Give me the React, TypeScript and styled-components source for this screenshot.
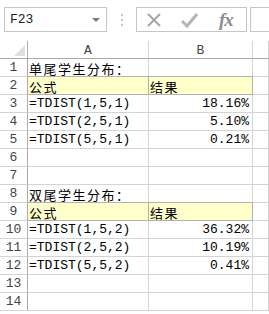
import React from "react";
import styled, { createGlobalStyle } from "styled-components";

const GlobalStyle = createGlobalStyle`
  html, body {
    margin: 0;
    padding: 0;
    background: #ffffff;
  }
  body {
    width: 269px;
    height: 314px;
    overflow: hidden;
    font-family: "Liberation Mono", "Noto Sans CJK SC", monospace;
  }
`;

const Page = styled.div`
  width: 269px;
  height: 314px;
  overflow: hidden;
  background: #fff;
`;

const TopBar = styled.div`
  height: 41px;
  box-sizing: border-box;
  padding: 7px 0 0 4px;
  display: flex;
  align-items: flex-start;
`;

const NameBox = styled.div`
  width: 103px;
  height: 25px;
  box-sizing: border-box;
  border: 1px solid #c6c6c6;
  display: flex;
  align-items: center;
  justify-content: space-between;
  padding: 0 6px 0 5px;
  font-family: "Liberation Mono", monospace;
  font-size: 13px;
  color: #222;
`;

const Caret = styled.span`
  width: 0;
  height: 0;
  border-left: 4px solid transparent;
  border-right: 4px solid transparent;
  border-top: 4px solid #7a7a7a;
`;

const Grip = styled.div`
  width: 29px;
  height: 25px;
  display: flex;
  flex-direction: column;
  align-items: center;
  justify-content: center;
  gap: 3px;
  span {
    width: 2px;
    height: 2px;
    background: #c8c8c8;
  }
`;

const FormulaButtons = styled.div`
  width: 111px;
  height: 25px;
  box-sizing: border-box;
  border: 1px solid #c6c6c6;
  display: flex;
  align-items: center;
  padding: 0 6px 0 9px;
`;

const IconSlot = styled.div<{ w: number }>`
  width: ${(p) => p.w}px;
  display: flex;
  align-items: center;
  justify-content: flex-start;
`;

const Fx = styled.span`
  font-family: "Liberation Serif", serif;
  font-style: italic;
  font-weight: bold;
  font-size: 19px;
  color: #8c8c8c;
  letter-spacing: -1px;
  line-height: 1;
`;

const FormulaInput = styled.div`
  flex: 1;
  height: 25px;
  margin-left: 3px;
  box-sizing: border-box;
  border: 1px solid #c6c6c6;
  border-right: none;
`;

const Sheet = styled.div`
  display: grid;
  grid-template-columns: 28px 121px 104px 1fr;
  grid-auto-rows: 18px;
`;

const Corner = styled.div`
  box-sizing: border-box;
  border-right: 1px solid #ababab;
  border-bottom: 1px solid #ababab;
  position: relative;
`;

const CornerMark = styled.span`
  position: absolute;
  right: 2px;
  bottom: 2px;
  width: 0;
  height: 0;
  border-left: 11px solid transparent;
  border-bottom: 11px solid #dfdfdf;
`;

const ColHead = styled.div`
  box-sizing: border-box;
  border-right: 1px solid #d4d4d4;
  border-bottom: 1px solid #ababab;
  display: flex;
  align-items: center;
  justify-content: center;
  font-family: "Liberation Mono", monospace;
  font-size: 13px;
  color: #444;
  padding-top: 1px;
`;

const RowHead = styled.div`
  box-sizing: border-box;
  border-right: 1px solid #ababab;
  border-bottom: 1px solid #d4d4d4;
  display: flex;
  align-items: center;
  justify-content: center;
  font-family: "Liberation Mono", monospace;
  font-size: 13px;
  color: #444;
`;

const Cell = styled.div<{ note?: boolean; right?: boolean; cjk?: boolean }>`
  box-sizing: border-box;
  border-right: 1px solid ${(p) => (p.note ? "#b2b2b2" : "#d4d4d4")};
  border-bottom: 1px solid ${(p) => (p.note ? "#b2b2b2" : "#d4d4d4")};
  background: ${(p) => (p.note ? "#ffffcc" : "transparent")};
  box-shadow: ${(p) => (p.note ? "0 -1px 0 #b2b2b2" : "none")};
  display: flex;
  align-items: center;
  justify-content: ${(p) => (p.right ? "flex-end" : "flex-start")};
  padding: ${(p) => (p.cjk ? "1px 3px 0 1px" : "0 3px 0 1px")};
  white-space: nowrap;
  font-family: ${(p) =>
    p.cjk ? '"Noto Sans CJK SC", sans-serif' : '"Liberation Mono", monospace'};
  font-size: 13px;
  letter-spacing: ${(p) => (p.cjk ? "1.5px" : "0")};
  color: #000;
  line-height: 1;
`;

type Row = { a?: string; b?: string; note?: boolean };

const rows: Row[] = [
  { a: "单尾学生分布：" },
  { a: "公式", b: "结果", note: true },
  { a: "=TDIST(1,5,1)", b: "18.16%" },
  { a: "=TDIST(2,5,1)", b: "5.10%" },
  { a: "=TDIST(5,5,1)", b: "0.21%" },
  {},
  {},
  { a: "双尾学生分布：" },
  { a: "公式", b: "结果", note: true },
  { a: "=TDIST(1,5,2)", b: "36.32%" },
  { a: "=TDIST(2,5,2)", b: "10.19%" },
  { a: "=TDIST(5,5,2)", b: "0.41%" },
  {},
  {},
];

const isCjk = (s?: string) => !!s && /[\u4e00-\u9fff]/.test(s);

const App: React.FC = () => {
  return (
    <Page>
      <GlobalStyle />
      <TopBar>
        <NameBox>
          <span>F23</span>
          <Caret />
        </NameBox>
        <Grip>
          <span />
          <span />
          <span />
        </Grip>
        <FormulaButtons>
          <IconSlot w={35}>
            <svg width="16" height="16" viewBox="0 0 16 16">
              <path d="M2 2 L14 14 M14 2 L2 14" stroke="#a6a6a6" strokeWidth="2" fill="none" />
            </svg>
          </IconSlot>
          <IconSlot w={38}>
            <svg width="17" height="16" viewBox="0 0 17 16">
              <path d="M1 9 L6 14 L16 2" stroke="#b4b4b4" strokeWidth="3" fill="none" />
            </svg>
          </IconSlot>
          <IconSlot w={20}>
            <Fx>fx</Fx>
          </IconSlot>
        </FormulaButtons>
        <FormulaInput />
      </TopBar>
      <Sheet>
        <Corner>
          <CornerMark />
        </Corner>
        <ColHead>A</ColHead>
        <ColHead>B</ColHead>
        <ColHead />
        {rows.map((r, i) => (
          <React.Fragment key={i}>
            <RowHead>{i + 1}</RowHead>
            <Cell note={r.note} cjk={isCjk(r.a)}>
              {r.a}
            </Cell>
            <Cell note={r.note} cjk={isCjk(r.b)} right={!isCjk(r.b)}>
              {r.b}
            </Cell>
            <Cell />
          </React.Fragment>
        ))}
      </Sheet>
    </Page>
  );
};

export default App;
